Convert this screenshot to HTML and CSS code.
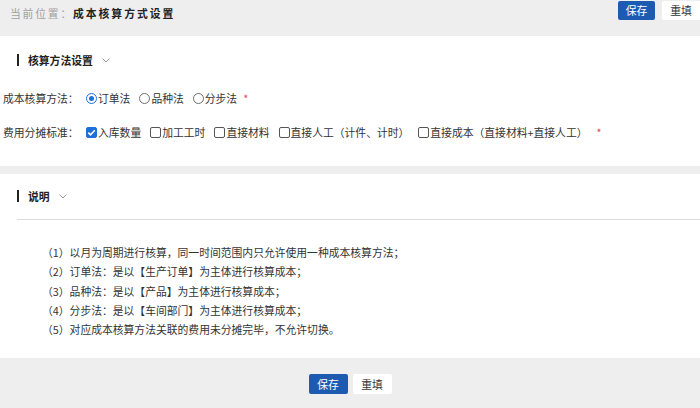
FILE: index.html
```html
<!DOCTYPE html>
<html lang="zh">
<head>
<meta charset="utf-8">
<title>成本核算方式设置</title>
<link rel="stylesheet" href="styles.css">
</head>
<body>
<div class="topbar">
  <div class="crumb"><span class="crumb-label">当前位置：</span><span class="crumb-title">成本核算方式设置</span></div>
  <div class="top-actions">
    <button class="btn btn-primary">保存</button>
    <button class="btn btn-plain btn-top-reset">重填</button>
  </div>
</div>

<section class="panel panel-method">
  <div class="sec-title"><span class="bar"></span><span class="sec-text">核算方法设置</span><span class="chev"><svg width="8" height="5" viewBox="0 0 8 5"><path d="M0.5 0.5 L4 4 L7.5 0.5" fill="none" stroke="#999" stroke-width="1"/></svg></span></div>
  <div class="form-row row-first">
    <span class="label">成本核算方法：</span>
    <span class="opt"><span class="radio checked"></span>订单法</span>
    <span class="opt"><span class="radio"></span>品种法</span>
    <span class="opt"><span class="radio"></span>分步法</span>
    <span class="req">*</span>
  </div>
  <div class="form-row row-second">
    <span class="label">费用分摊标准：</span>
    <span class="opt"><span class="check checked"><svg width="11" height="11" viewBox="0 0 11 11"><path d="M2.3 5.6 L4.5 7.8 L8.8 3.2" fill="none" stroke="#fff" stroke-width="1.6"/></svg></span>入库数量</span>
    <span class="opt"><span class="check"></span>加工工时</span>
    <span class="opt"><span class="check"></span>直接材料</span>
    <span class="opt"><span class="check"></span>直接人工（计件、计时）</span>
    <span class="opt"><span class="check"></span>直接成本（直接材料+直接人工）</span>
    <span class="req req-wide">*</span>
  </div>
</section>

<section class="panel panel-note">
  <div class="sec-title"><span class="bar"></span><span class="sec-text">说明</span><span class="chev"><svg width="8" height="5" viewBox="0 0 8 5"><path d="M0.5 0.5 L4 4 L7.5 0.5" fill="none" stroke="#999" stroke-width="1"/></svg></span></div>
  <div class="divider"></div>
  <ul class="notes">
    <li>（1）以月为周期进行核算，同一时间范围内只允许使用一种成本核算方法；</li>
    <li>（2）订单法：是以【生产订单】为主体进行核算成本；</li>
    <li>（3）品种法：是以【产品】为主体进行核算成本；</li>
    <li>（4）分步法：是以【车间部门】为主体进行核算成本；</li>
    <li>（5）对应成本核算方法关联的费用未分摊完毕，不允许切换。</li>
  </ul>
</section>

<div class="footer">
  <button class="btn btn-primary btn-foot">保存</button>
  <button class="btn btn-plain btn-foot">重填</button>
</div>
</body>
</html>
```

FILE: styles.css
```css
* { box-sizing: border-box; }
html, body { margin: 0; padding: 0; }
body {
  background: #eeeeee;
  font-family: "Noto Sans CJK SC", "Microsoft YaHei", sans-serif;
  font-size: 10.8px;
  color: #333;
  width: 700px;
  height: 408px;
  overflow: hidden;
}
.topbar {
  height: 36px;
  display: flex;
  justify-content: space-between;
  align-items: flex-start;
  padding-left: 10px;
}
.crumb {
  padding-top: 6px;
  line-height: 14px;
}
.crumb-label { color: #a0a0a0; letter-spacing: 1.8px; }
.crumb-title { color: #222; font-weight: bold; letter-spacing: 2px; }
.top-actions {
  display: flex;
  gap: 7px;
  padding-top: 1px;
}
.btn {
  font-family: inherit;
  font-size: 10.8px;
  height: 19px;
  border: none;
  border-radius: 2px;
  padding: 0;
  width: 37px;
  line-height: 19px;
  cursor: pointer;
}
.btn-primary { background: #1d5bb3; color: #fff; }
.btn-plain { background: #fff; color: #333; }
.btn-top-reset { width: 38px; border-radius: 2px 0 0 2px; }

.panel { background: #fff; }
.panel-method { padding: 17px 0 27px; margin-bottom: 8px; }
.panel-note { padding: 15px 0 19px; }

.sec-title {
  display: flex;
  align-items: center;
  height: 14px;
  padding-left: 17px;
  font-weight: bold;
  color: #222;
}
.bar {
  width: 2px;
  height: 12px;
  background: #222;
  margin-right: 9px;
}
.chev { margin-left: 9px; display: flex; align-items: center; }

.form-row {
  display: flex;
  align-items: center;
  height: 14px;
  padding-left: 3px;
  color: #333;
}
.row-first { margin-top: 24px; }
.row-second { margin-top: 20px; }
.label { width: 83px; }
.opt {
  display: flex;
  align-items: center;
  margin-right: 9px;
  white-space: nowrap;
}
.radio {
  width: 11px;
  height: 11px;
  border: 1px solid #707070;
  border-radius: 50%;
  margin-right: 1px;
  position: relative;
}
.radio.checked { border-color: #1e6fd9; }
.radio.checked::after {
  content: "";
  position: absolute;
  left: 2px; top: 2px;
  width: 5px; height: 5px;
  border-radius: 50%;
  background: #1e6fd9;
}
.check {
  width: 11px;
  height: 11px;
  border: 1px solid #555;
  border-radius: 2px;
  margin-right: 1px;
  display: flex;
}
.check.checked {
  background: #1e6fd9;
  border-color: #1e6fd9;
}
.check svg { margin: -1px; }
.req { color: #e8454a; margin-left: -3px; }
.req-wide { margin-left: 0; }

.divider {
  margin: 16px 0 0 17px;
  height: 1px;
  border-top: 1px solid #dcdcdc;
}
.notes {
  list-style: none;
  margin: 23px 0 0;
  padding-left: 42px;
  line-height: 19.3px;
  color: #333;
}

.footer {
  display: flex;
  justify-content: center;
  gap: 5px;
  padding-top: 16px;
}
.btn-foot { width: 39px; height: 20px; line-height: 20px; }
```
